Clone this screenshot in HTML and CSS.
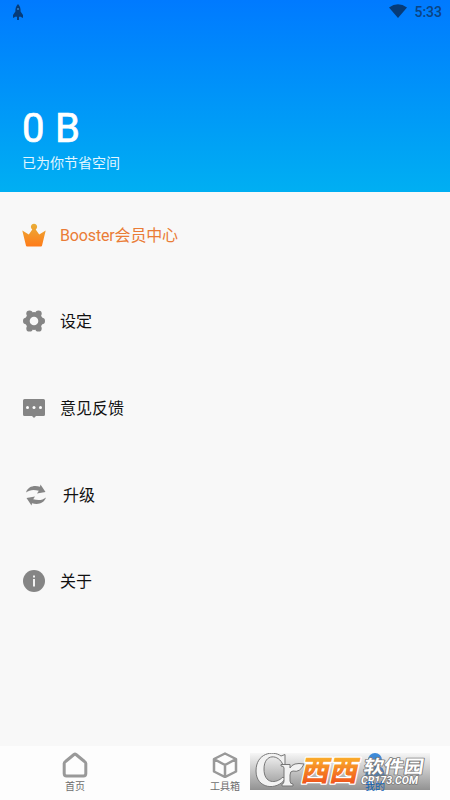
FILE: index.html
```html
<!DOCTYPE html>
<html lang="zh-CN">
<head>
<meta charset="utf-8">
<title>Booster</title>
<link rel="stylesheet" href="styles.css">
</head>
<body>
<div class="app">
  <header class="hero">
    <div class="status">
      <svg class="rocket" width="12" height="18" viewBox="0 0 12 18"><path d="M6 1C3.800 3 3.300 6 3.400 8.500L1 12v3l3-1.500 1 .5v3h2v-3l1-.5 3 1.500v-3L8.600 8.500C8.700 6 8.200 3 6 1z"/><circle cx="6" cy="6" r="1" fill="#3484c8"/></svg>
      <svg class="wifi" width="18" height="14" viewBox="0 0 18 14"><path d="M0 3.500Q9-3 18 3.500L9 14z"/></svg>
      <span class="time">5:33</span>
    </div>
    <div class="amount">0 B</div>
    <div class="caption">已为你节省空间</div>
  </header>
  <main class="menu">
    <div class="row vip">
      <svg class="icon" viewBox="0 0 24 24"><defs><linearGradient id="gold" x1="0" y1="0" x2="0" y2="1"><stop offset="0" stop-color="#e9ae38"/><stop offset="1" stop-color="#ff7b19"/></linearGradient></defs><path fill="url(#gold)" d="M.3 7.500L6.800 11.500 10.300 6.500A3.100 3.100 0 1 1 13.700 6.500L17.200 11.500 23.700 7.500 20 22.800Q19.800 23.500 19 23.500H5Q4.200 23.500 4 22.800z"/></svg>
      <span>Booster会员中心</span>
    </div>
    <div class="row">
      <svg class="icon" viewBox="0 0 24 24"><g fill="#858585"><circle cx="12" cy="12" r="9"/><circle cx="4.200" cy="12" r="3.200"/><circle cx="19.800" cy="12" r="3.200"/><circle cx="7.500" cy="4.600" r="3.200"/><circle cx="16.500" cy="4.600" r="3.200"/><circle cx="7.500" cy="19.400" r="3.200"/><circle cx="16.500" cy="19.400" r="3.200"/></g><circle cx="12" cy="12" r="4.300" fill="#f8f8f8"/></svg>
      <span>设定</span>
    </div>
    <div class="row">
      <svg class="icon" viewBox="0 0 24 24"><path fill="#858585" d="M2.500 3h19Q23 3 23 4.500v14Q23 20 21.500 20H14l-2 2-2-2H2.500Q1 20 1 18.500v-14Q1 3 2.500 3z"/><g fill="#fff"><circle cx="5.500" cy="11.500" r="1.500"/><circle cx="12" cy="11.500" r="1.500"/><circle cx="18.500" cy="11.500" r="1.500"/></g></svg>
      <span>意见反馈</span>
    </div>
    <div class="row upgrade">
      <svg class="icon" viewBox="0 0 24 24"><g fill="#858585"><path id="arrow" d="M2 9.500C4 3.500 10 2 16 3.800L16.500 1.600 21.500 9 13 10.600 14.800 7.800C9.500 6.300 5.500 6.800 2 9.500z"/><use href="#arrow" transform="rotate(180 12 12)"/></g></svg>
      <span>升级</span>
    </div>
    <div class="row">
      <svg class="icon" viewBox="0 0 24 24"><circle cx="12" cy="12" r="11" fill="#858585"/><path fill="#f2f2f2" d="M11 6.500h2v2h-2zM11 10h2v7.500h-2z"/></svg>
      <span>关于</span>
    </div>
  </main>
  <nav class="tabs">
    <div class="tab">
      <svg width="26" height="26" viewBox="0 0 26 26"><path d="M3.500 9.500Q2.200 10.200 2.200 11.500V21.500Q2.200 24 4.500 24H21.500Q23.800 24 23.800 21.500V11.500Q23.800 10.200 22.500 9.500L14 2.500Q13 1.800 12 2.500z"/></svg>
      <span>首页</span>
    </div>
    <div class="tab">
      <svg class="cube" width="26" height="26" viewBox="0 0 26 26"><path d="M13 1.500L24 7v12.500L13 25 2 19.500V7zM2 7l11 6 11-6M13 13v12"/></svg>
      <span>工具箱</span>
    </div>
    <div class="tab active">
      <svg width="26" height="26" viewBox="0 0 26 26"><circle cx="13" cy="8" r="7"/><path d="M3 24Q4 13 13 13T23 24z"/></svg>
      <span>我的</span>
    </div>
  </nav>
  <div class="mark">
    <svg width="180" height="37" viewBox="0 0 180 37">
      <defs>
        <linearGradient id="fire" x1="0" y1="0" x2="0" y2="1"><stop offset="0.2" stop-color="#fbb52c"/><stop offset="0.900" stop-color="#ef4f1c"/></linearGradient>
        <path id="c" fill-rule="evenodd" d="M35 1.500V12H33C29 1 14 0 14 16C14 31 26 31 33 24L35 26C27 38 6 36 6 18C6 0 23-3 31 3z"/>
        <path id="r" d="M31 11.500H40V15Q43 9 54 11Q50 20 43 18Q40 18 40 22V28Q40 31 43 31V33H32V31Q34 31 34 28V15Q34 13 31 13z"/>
      </defs>
      <g class="letters"><use href="#c"/><use href="#r"/></g>
      <g class="west" transform="translate(50 27.500) skewX(-12) scale(1 1.250)"><text x="0" y="0" textLength="57" lengthAdjust="spacingAndGlyphs">西西</text></g>
      <g class="soft" transform="translate(113 19.500) skewX(-9)"><text x="0" y="0" textLength="60" lengthAdjust="spacingAndGlyphs">软件园</text></g>
      <text class="site" x="111" y="30.500" textLength="57" lengthAdjust="spacingAndGlyphs">CR173.COM</text>
    </svg>
  </div>
</div>
</body>
</html>
```
FILE: styles.css
```css
* { box-sizing: border-box; }
body { margin: 0; font-family: Roboto, "Noto Sans CJK SC", sans-serif; background: #f8f8f8; }
.app { position: relative; width: 450px; height: 800px; display: flex; flex-direction: column; overflow: hidden; }
.hero { height: 192px; background: linear-gradient(#007aff, #00aff2); color: #fff; }
.status { height: 24px; display: flex; align-items: center; padding: 0 8px 0 12px; color: #0b4383; fill: #063b78; }
.wifi { margin-left: auto; margin-right: 7px; margin-top: -2px; }
.time { font-size: 14px; font-weight: 500; line-height: 24px; }
.amount { margin: 80px 0 0 22px; font-size: 40px; line-height: 50px; -webkit-text-stroke: .7px #fff; letter-spacing: .3px; }
.caption { margin: -1px 0 0 22px; font-size: 14px; line-height: 20px; color: #e2f6ff; }
.menu { flex: 1; }
.row { height: 86.600px; display: flex; align-items: center; gap: 14px; padding-left: 22px; font-size: 16px; color: #111; }
.row span { margin-top: -3px; }
.icon { width: 24px; height: 24px; margin-top: -1px; }
.vip { color: #ea7c36; letter-spacing: -.15px; }
.upgrade { gap: 15px; padding-left: 24px; }
.tabs { height: 54px; display: flex; background: #fdfdfd; }
.tab { flex: 1; display: flex; flex-direction: column; align-items: center; padding-top: 6px; font-size: 10px; line-height: 14px; color: #6d6d6d; }
.tab svg { fill: none; stroke: #999; stroke-width: 3; stroke-linejoin: round; }
.tab .cube { stroke-width: 2.500; }
.tab span { margin-top: 2px; }
.active { color: #1463b4; }
.active span { position: relative; z-index: 1; }
.tab.active svg { fill: #388ce2; stroke: none; }
.mark { position: absolute; left: 250px; top: 753px; width: 180px; height: 37px; background: linear-gradient(rgba(120,120,120,.05), rgba(110,110,110,.75)); }
.mark svg { display: block; }
.letters { fill: #f2f2f2; stroke: #777; stroke-width: 1; }
.mark text { font-family: "Noto Sans CJK SC", sans-serif; font-weight: 900; paint-order: stroke; stroke-linejoin: round; }
.west { font-size: 23px; fill: url(#fire); stroke: #fff; stroke-width: 2; }
.soft { font-size: 18px; fill: #fff; stroke: #777; stroke-width: 1.500; }
.mark .soft text { font-weight: 700; }
.mark .site { font-family: Roboto, sans-serif; font-size: 10px; font-weight: 700; font-style: italic; fill: #fff; stroke: #777; stroke-width: 1.500; }
```
